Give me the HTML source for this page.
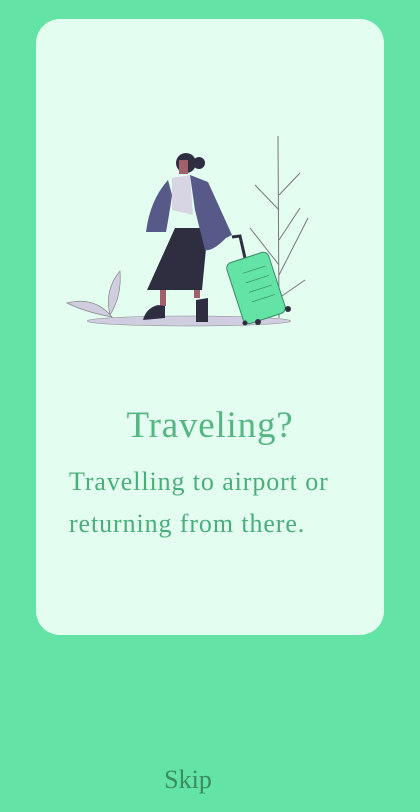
<!DOCTYPE html><html><head><style>
body{margin:0;width:420px;height:812px;background:#63e3a5;position:relative;overflow:hidden;font-family:"Liberation Serif",serif}
.card{position:absolute;left:36px;top:19px;width:348px;height:616px;background:#e3fdf0;border-radius:24px}
.t{position:absolute;left:0;width:420px;text-align:center;top:404px;font-size:37px;letter-spacing:.8px;color:#55b683;padding-left:0;box-sizing:border-box}
.b{position:absolute;left:69px;top:461px;font-size:26px;letter-spacing:.9px;line-height:42px;color:#4aae7b;width:320px}
.s{position:absolute;left:0;width:376px;text-align:center;top:765px;font-size:26px;color:#3a8c63}
</style></head><body>
<div class="card"></div>
<svg style="position:absolute;left:0;top:0" width="420" height="812">
<ellipse cx="189" cy="321" rx="102" ry="5" fill="#d0cde0" stroke="#888" stroke-width=".5"/>
<g stroke="#777" stroke-width="1" fill="none"><path d="M278 136 L279 318"/><path d="M279 210 L255 185 M279 195 L300 173 M279 240 L300 208 M279 265 L250 228 M279 275 L308 218 M279 298 L305 280"/></g>
<path d="M67 303 Q95 296 112 317 Q85 312 67 303Z M110 315 Q104 290 120 271 Q122 296 110 315Z" fill="#d0cde0" stroke="#888" stroke-width=".7"/>
<path d="M175 228 L208 228 L202 290 L147 290 Z" fill="#2f2e41"/>
<path d="M172 178 L190 175 L193 215 L172 210 Z" fill="#d7d4e4"/>
<path d="M168 180 Q150 200 146 232 L166 232 Q170 210 172 195Z" fill="#575a89"/>
<path d="M190 175 L208 182 L232 235 L226 238 Q212 252 205 250 L195 210Z" fill="#575a89"/>
<circle cx="186" cy="163" r="10" fill="#2f2e41"/><circle cx="199" cy="163" r="6" fill="#2f2e41"/>
<rect x="179" y="160" width="9" height="14" fill="#a0616a"/>
<rect x="160" y="290" width="6" height="16" fill="#a0616a"/><rect x="194" y="290" width="6" height="8" fill="#a0616a"/>
<path d="M143 320 Q146 308 158 305 L165 306 L165 318 Z M196 322 L196 300 L208 298 L208 322Z" fill="#2f2e41"/>
<path d="M232 237 L240 236 L245 258" stroke="#2f2e41" stroke-width="3" fill="none"/>
<g transform="rotate(-18 256 288)"><rect x="234" y="256" width="44" height="64" rx="6" fill="#63e3a5" stroke="#3a8c63" stroke-width="1"/><path d="M248 270 H272 M248 280 H272 M248 290 H272 M248 300 H272" stroke="#3a8c63" stroke-width=".7"/></g>
<circle cx="258" cy="322" r="3" fill="#2f2e41"/><circle cx="288" cy="309" r="3" fill="#2f2e41"/><circle cx="245" cy="323" r="2.5" fill="#2f2e41"/>
</svg>
<div class="t">Traveling?</div>
<div class="b">Travelling to airport or returning from there.</div>
<div class="s">Skip</div>
</body></html>
